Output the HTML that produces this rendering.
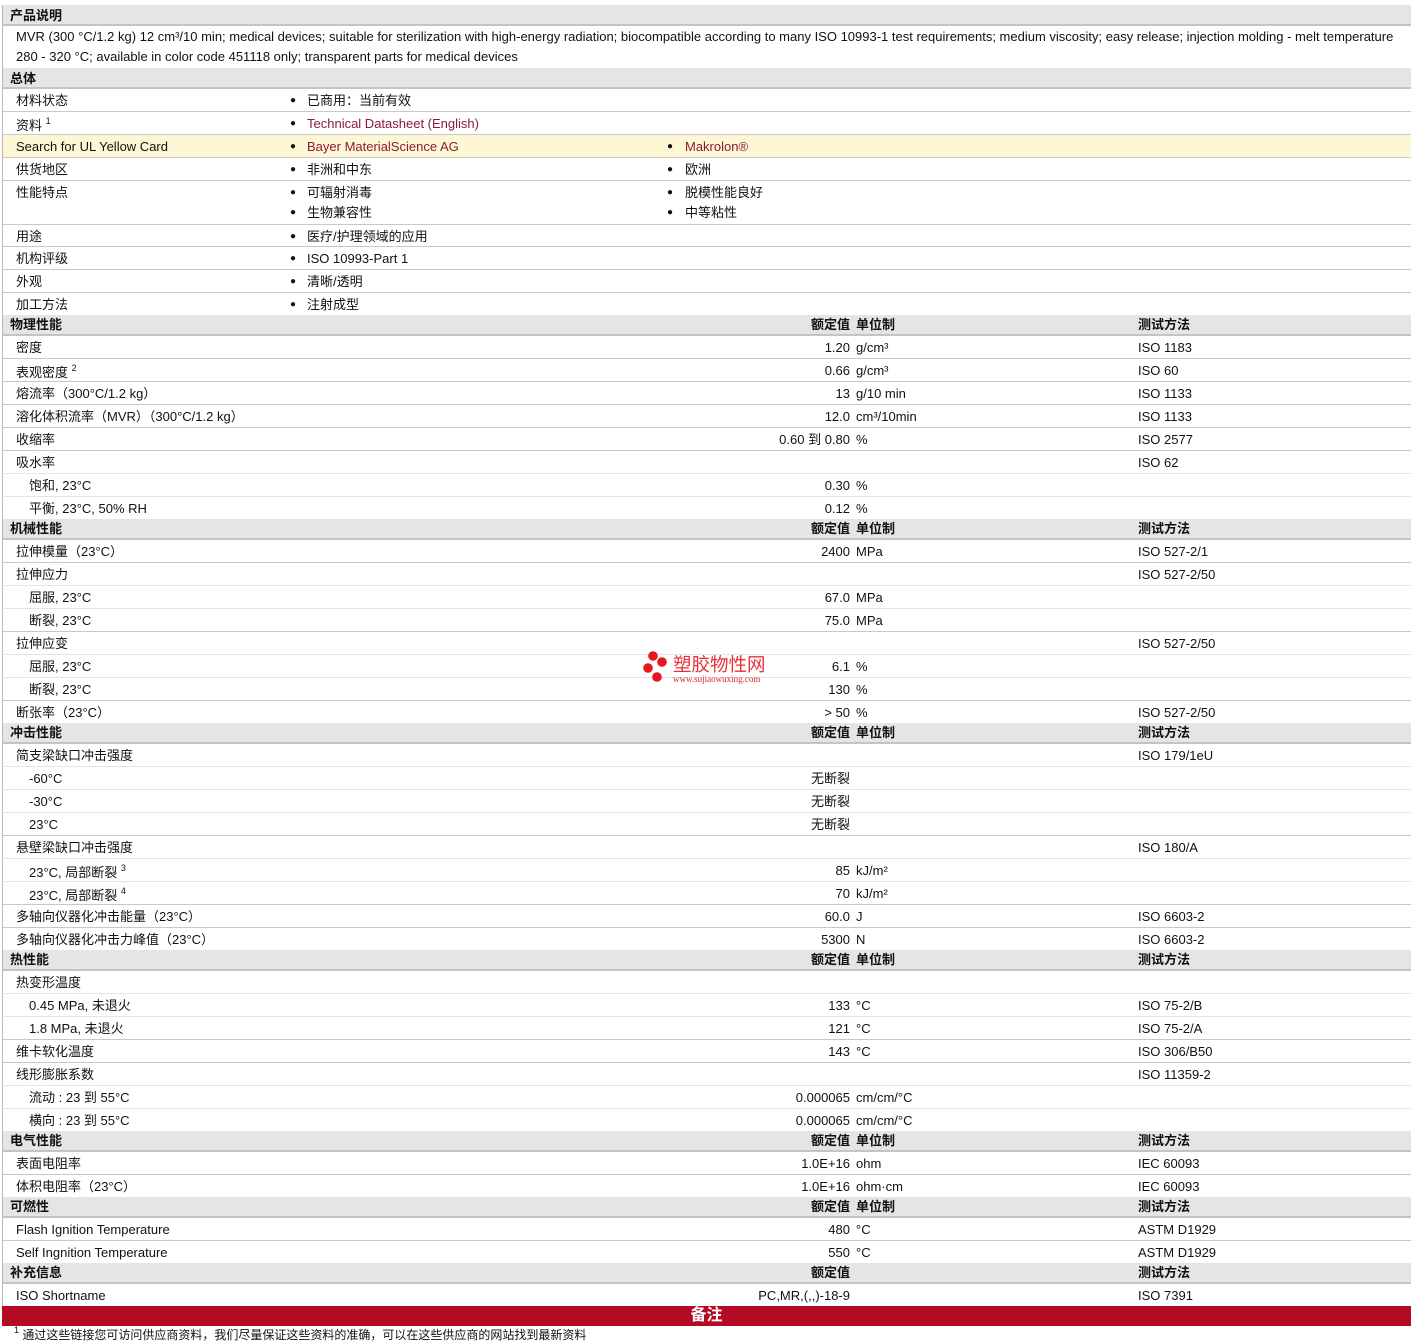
<!DOCTYPE html>
<html><head><meta charset="utf-8">
<style>
*{margin:0;padding:0;box-sizing:border-box}
body{width:1411px;height:1336px;position:relative;background:#fff;font-family:"Liberation Sans","Noto Sans CJK SC",sans-serif;font-size:13px;color:#111;overflow:hidden}
.r{position:absolute;left:2px;right:0;border-bottom:1px solid #c8c8cc;border-left:1px solid #b8b8b8;padding-top:1px}
.r.sub{border-bottom-color:#e4e4e6}
.h{background:#e5e5e5;font-weight:bold;border-bottom:2px solid #c4c4c8}
.r span{position:absolute;white-space:nowrap}
.l{left:13px}.s{left:26px}.hl{left:7px}
.d1{left:287px;font-size:10px}.t1{left:304px}
.d2{left:664px;font-size:10px}.t2{left:682px}
.v{right:561px}.u{left:853px}.m{left:1135px}
.lnk{color:#8b1a3a}
sup{font-size:9px;vertical-align:6px;line-height:0}
</style></head><body>
<div style="position:absolute;left:2px;right:0;top:5px;border-top:1px solid #c8c8cc"></div>
<div class="r h" style="top:5px;height:21px;line-height:19px"><span class="hl">产品说明</span></div>
<div class="r" style="top:26px;height:43px;line-height:20px"><span class="l" style="top:1px">MVR (300 °C/1.2 kg) 12 cm³/10 min; medical devices; suitable for sterilization with high-energy radiation; biocompatible according to many ISO 10993-1 test requirements; medium viscosity; easy release; injection molding - melt temperature<br>280 - 320 °C; available in color code 451118 only; transparent parts for medical devices</span></div>
<div class="r h" style="top:68px;height:21px;line-height:19px"><span class="hl">总体</span></div>
<div class="r" style="top:89px;height:23px;line-height:22px"><span class="l">材料状态</span><span class="d1">●</span><span class="t1">已商用：当前有效</span></div>
<div class="r" style="top:112px;height:23px;line-height:22px"><span class="l" style="top:3px">资料 <sup>1</sup></span><span class="d1">●</span><span class="t1 lnk">Technical Datasheet (English)</span></div>
<div class="r" style="top:135px;height:23px;line-height:22px;background:#fdf8d3"><span class="l">Search for UL Yellow Card</span><span class="d1">●</span><span class="t1 lnk">Bayer MaterialScience AG</span><span class="d2">●</span><span class="t2 lnk">Makrolon®</span></div>
<div class="r" style="top:158px;height:23px;line-height:22px"><span class="l">供货地区</span><span class="d1">●</span><span class="t1">非洲和中东</span><span class="d2">●</span><span class="t2">欧洲</span></div>
<div class="r" style="top:181px;height:44px;line-height:20px"><span class="l" style="top:2px">性能特点</span><span class="d1" style="top:2px;line-height:20px">●<br>●</span><span class="t1" style="top:2px">可辐射消毒<br>生物兼容性</span><span class="d2" style="top:2px;line-height:20px">●<br>●</span><span class="t2" style="top:2px">脱模性能良好<br>中等粘性</span></div>
<div class="r" style="top:225px;height:22px;line-height:21px"><span class="l">用途</span><span class="d1">●</span><span class="t1">医疗/护理领域的应用</span></div>
<div class="r" style="top:247px;height:23px;line-height:22px"><span class="l">机构评级</span><span class="d1">●</span><span class="t1">ISO 10993-Part 1</span></div>
<div class="r" style="top:270px;height:23px;line-height:22px"><span class="l">外观</span><span class="d1">●</span><span class="t1">清晰/透明</span></div>
<div class="r" style="top:293px;height:23px;line-height:22px"><span class="l">加工方法</span><span class="d1">●</span><span class="t1">注射成型</span></div>

<div class="r h" style="top:315px;height:21px;line-height:18px"><span class="hl">物理性能</span><span class="v">额定值</span><span class="u">单位制</span><span class="m">测试方法</span></div>
<div class="r" style="top:336px;height:23px;line-height:22px"><span class="l">密度</span><span class="v">1.20</span><span class="u">g/cm³</span><span class="m">ISO 1183</span></div>
<div class="r" style="top:359px;height:23px;line-height:22px"><span class="l" style="top:3px">表观密度 <sup>2</sup></span><span class="v">0.66</span><span class="u">g/cm³</span><span class="m">ISO 60</span></div>
<div class="r" style="top:382px;height:23px;line-height:22px"><span class="l">熔流率（300°C/1.2 kg）</span><span class="v">13</span><span class="u">g/10 min</span><span class="m">ISO 1133</span></div>
<div class="r" style="top:405px;height:23px;line-height:22px"><span class="l">溶化体积流率（MVR）（300°C/1.2 kg）</span><span class="v">12.0</span><span class="u">cm³/10min</span><span class="m">ISO 1133</span></div>
<div class="r" style="top:428px;height:23px;line-height:22px"><span class="l">收缩率</span><span class="v">0.60 到 0.80</span><span class="u">%</span><span class="m">ISO 2577</span></div>
<div class="r sub" style="top:451px;height:23px;line-height:21px"><span class="l">吸水率</span><span class="m">ISO 62</span></div>
<div class="r sub" style="top:474px;height:23px;line-height:22px"><span class="s">饱和, 23°C</span><span class="v">0.30</span><span class="u">%</span></div>
<div class="r" style="top:497px;height:23px;line-height:22px"><span class="s">平衡, 23°C, 50% RH</span><span class="v">0.12</span><span class="u">%</span></div>

<div class="r h" style="top:519px;height:21px;line-height:18px"><span class="hl">机械性能</span><span class="v">额定值</span><span class="u">单位制</span><span class="m">测试方法</span></div>
<div class="r" style="top:540px;height:23px;line-height:22px"><span class="l">拉伸模量（23°C）</span><span class="v">2400</span><span class="u">MPa</span><span class="m">ISO 527-2/1</span></div>
<div class="r sub" style="top:563px;height:23px;line-height:21px"><span class="l">拉伸应力</span><span class="m">ISO 527-2/50</span></div>
<div class="r sub" style="top:586px;height:23px;line-height:22px"><span class="s">屈服, 23°C</span><span class="v">67.0</span><span class="u">MPa</span></div>
<div class="r" style="top:609px;height:23px;line-height:22px"><span class="s">断裂, 23°C</span><span class="v">75.0</span><span class="u">MPa</span></div>
<div class="r sub" style="top:632px;height:23px;line-height:22px"><span class="l">拉伸应变</span><span class="m">ISO 527-2/50</span></div>
<div class="r sub" style="top:655px;height:23px;line-height:22px"><span class="s">屈服, 23°C</span><span class="v">6.1</span><span class="u">%</span></div>
<div class="r" style="top:678px;height:23px;line-height:22px"><span class="s">断裂, 23°C</span><span class="v">130</span><span class="u">%</span></div>
<div class="r" style="top:701px;height:23px;line-height:22px"><span class="l">断张率（23°C）</span><span class="v">&gt; 50</span><span class="u">%</span><span class="m">ISO 527-2/50</span></div>

<div class="r h" style="top:723px;height:21px;line-height:18px"><span class="hl">冲击性能</span><span class="v">额定值</span><span class="u">单位制</span><span class="m">测试方法</span></div>
<div class="r sub" style="top:744px;height:23px;line-height:21px"><span class="l">简支梁缺口冲击强度</span><span class="m">ISO 179/1eU</span></div>
<div class="r sub" style="top:767px;height:23px;line-height:22px"><span class="s">-60°C</span><span class="v">无断裂</span></div>
<div class="r sub" style="top:790px;height:23px;line-height:22px"><span class="s">-30°C</span><span class="v">无断裂</span></div>
<div class="r" style="top:813px;height:23px;line-height:22px"><span class="s">23°C</span><span class="v">无断裂</span></div>
<div class="r sub" style="top:836px;height:23px;line-height:22px"><span class="l">悬壁梁缺口冲击强度</span><span class="m">ISO 180/A</span></div>
<div class="r sub" style="top:859px;height:23px;line-height:22px"><span class="s" style="top:3px">23°C, 局部断裂 <sup>3</sup></span><span class="v">85</span><span class="u">kJ/m²</span></div>
<div class="r" style="top:882px;height:23px;line-height:22px"><span class="s" style="top:3px">23°C, 局部断裂 <sup>4</sup></span><span class="v">70</span><span class="u">kJ/m²</span></div>
<div class="r" style="top:905px;height:23px;line-height:22px"><span class="l">多轴向仪器化冲击能量（23°C）</span><span class="v">60.0</span><span class="u">J</span><span class="m">ISO 6603-2</span></div>
<div class="r" style="top:928px;height:23px;line-height:22px"><span class="l">多轴向仪器化冲击力峰值（23°C）</span><span class="v">5300</span><span class="u">N</span><span class="m">ISO 6603-2</span></div>

<div class="r h" style="top:950px;height:21px;line-height:18px"><span class="hl">热性能</span><span class="v">额定值</span><span class="u">单位制</span><span class="m">测试方法</span></div>
<div class="r sub" style="top:971px;height:23px;line-height:21px"><span class="l">热变形温度</span></div>
<div class="r sub" style="top:994px;height:23px;line-height:22px"><span class="s">0.45 MPa, 未退火</span><span class="v">133</span><span class="u">°C</span><span class="m">ISO 75-2/B</span></div>
<div class="r" style="top:1017px;height:23px;line-height:22px"><span class="s">1.8 MPa, 未退火</span><span class="v">121</span><span class="u">°C</span><span class="m">ISO 75-2/A</span></div>
<div class="r" style="top:1040px;height:23px;line-height:21px"><span class="l">维卡软化温度</span><span class="v">143</span><span class="u">°C</span><span class="m">ISO 306/B50</span></div>
<div class="r sub" style="top:1063px;height:23px;line-height:22px"><span class="l">线形膨胀系数</span><span class="m">ISO 11359-2</span></div>
<div class="r sub" style="top:1086px;height:23px;line-height:22px"><span class="s">流动 : 23 到 55°C</span><span class="v">0.000065</span><span class="u">cm/cm/°C</span></div>
<div class="r" style="top:1109px;height:23px;line-height:22px"><span class="s">横向 : 23 到 55°C</span><span class="v">0.000065</span><span class="u">cm/cm/°C</span></div>

<div class="r h" style="top:1131px;height:21px;line-height:18px"><span class="hl">电气性能</span><span class="v">额定值</span><span class="u">单位制</span><span class="m">测试方法</span></div>
<div class="r" style="top:1152px;height:23px;line-height:22px"><span class="l">表面电阻率</span><span class="v">1.0E+16</span><span class="u">ohm</span><span class="m">IEC 60093</span></div>
<div class="r" style="top:1175px;height:23px;line-height:22px"><span class="l">体积电阻率（23°C）</span><span class="v">1.0E+16</span><span class="u">ohm·cm</span><span class="m">IEC 60093</span></div>

<div class="r h" style="top:1197px;height:21px;line-height:18px"><span class="hl">可燃性</span><span class="v">额定值</span><span class="u">单位制</span><span class="m">测试方法</span></div>
<div class="r" style="top:1218px;height:23px;line-height:22px"><span class="l">Flash Ignition Temperature</span><span class="v">480</span><span class="u">°C</span><span class="m">ASTM D1929</span></div>
<div class="r" style="top:1241px;height:23px;line-height:22px"><span class="l">Self Ingnition Temperature</span><span class="v">550</span><span class="u">°C</span><span class="m">ASTM D1929</span></div>

<div class="r h" style="top:1263px;height:21px;line-height:18px"><span class="hl">补充信息</span><span class="v">额定值</span><span class="m">测试方法</span></div>
<div class="r" style="top:1284px;height:22px;line-height:22px;border-bottom:none"><span class="l">ISO Shortname</span><span class="v">PC,MR,(,,)-18-9</span><span class="m">ISO 7391</span></div>
<div style="position:absolute;left:2px;right:0;top:1306px;height:20px;background:#b40a24;color:#fff;text-align:center;font-size:16px;line-height:20px;font-weight:bold">备注</div>
<div style="position:absolute;left:14px;top:1328px;font-size:12px;line-height:14px;white-space:nowrap"><sup>1</sup> 通过这些链接您可访问供应商资料，我们尽量保证这些资料的准确，可以在这些供应商的网站找到最新资料</div>

<div style="position:absolute;left:643px;top:650px;width:135px;height:36px">
<svg width="26" height="34" style="position:absolute;left:0;top:0"><circle cx="10" cy="6" r="4.8" fill="#e8141e"/><circle cx="19" cy="12" r="4.8" fill="#e8141e"/><circle cx="5" cy="18" r="4.8" fill="#e8141e"/><circle cx="14" cy="27" r="4.8" fill="#e8141e"/></svg>
<span style="position:absolute;left:30px;top:5px;color:#e8303a;font-size:18.5px;line-height:19px;white-space:nowrap">塑胶物性网</span>
<span style="position:absolute;left:30px;top:24px;color:#d42a30;font-size:9px;font-family:'Liberation Serif',serif;white-space:nowrap">www.sujiaowuxing.com</span>
</div>
</body></html>
